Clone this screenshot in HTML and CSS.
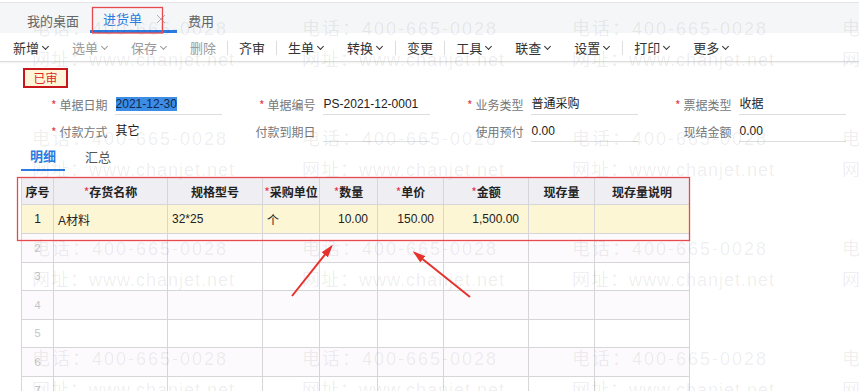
FILE: index.html
```html
<!DOCTYPE html>
<html>

<head>
    <meta charset="utf-8">
    <meta name="viewport" content="width=device-width, initial-scale=1.0" />
    <link rel="stylesheet" href="styles.css">
</head>

<body>
    <div class="page">
        <!-- Tabs -->
        <div class="tabbar">
            <div class="tab">我的桌面</div>
            <div class="tab active">进货单
                <svg class="close" width="10" height="10" viewBox="0 0 10 10">
                    <path d="M1 1L9 9M9 1L1 9" stroke="#b0b0b0" stroke-width="1" fill="none" />
                </svg>
            </div>
            <div class="tab">费用</div>
        </div>

        <!-- Toolbar -->
        <div class="toolbar">
            <span class="tool drop">新增</span>
            <span class="tool drop off">选单</span>
            <span class="tool drop off">保存</span>
            <span class="tool off">删除</span>
            <span class="sep"></span>
            <span class="tool">齐审</span>
            <span class="sep"></span>
            <span class="tool drop">生单</span>
            <span class="tool drop">转换</span>
            <span class="sep"></span>
            <span class="tool">变更</span>
            <span class="sep"></span>
            <span class="tool drop">工具</span>
            <span class="tool drop">联查</span>
            <span class="tool drop">设置</span>
            <span class="sep"></span>
            <span class="tool drop">打印</span>
            <span class="tool drop">更多</span>
        </div>

        <div class="content">
            <div class="stamp">已审</div>

            <!-- Header fields -->
            <div class="form">
                <div class="field"><label><i>*</i>单据日期</label><div class="val"><span class="sel">2021-12-30</span></div></div>
                <div class="field"><label><i>*</i>单据编号</label><div class="val">PS-2021-12-0001</div></div>
                <div class="field"><label><i>*</i>业务类型</label><div class="val">普通采购</div></div>
                <div class="field"><label><i>*</i>票据类型</label><div class="val">收据</div></div>
                <div class="field"><label><i>*</i>付款方式</label><div class="val bare">其它</div></div>
                <div class="field"><label>付款到期日</label><div class="val"></div></div>
                <div class="field"><label>使用预付</label><div class="val">0.00</div></div>
                <div class="field"><label>现结金额</label><div class="val">0.00</div></div>
            </div>

            <div class="subtabs">
                <div class="subtab active">明细</div>
                <div class="subtab">汇总</div>
            </div>

            <!-- Detail grid -->
            <table class="grid">
                <colgroup>
                    <col style="width:32px">
                    <col style="width:114px">
                    <col style="width:95px">
                    <col style="width:57px">
                    <col style="width:58px">
                    <col style="width:66px">
                    <col style="width:85px">
                    <col style="width:66px">
                    <col style="width:95px">
                </colgroup>
                <thead>
                    <tr>
                        <th>序号</th>
                        <th><i>*</i>存货名称</th>
                        <th>规格型号</th>
                        <th><i>*</i>采购单位</th>
                        <th><i>*</i>数量</th>
                        <th><i>*</i>单价</th>
                        <th><i>*</i>金额</th>
                        <th>现存量</th>
                        <th>现存量说明</th>
                    </tr>
                </thead>
                <tbody>
                    <tr class="filled">
                        <td class="no">1</td>
                        <td>A材料</td>
                        <td>32*25</td>
                        <td>个</td>
                        <td class="num">10.00</td>
                        <td class="num">150.00</td>
                        <td class="num">1,500.00</td>
                        <td></td>
                        <td></td>
                    </tr>
                    <tr><td class="idx">2</td><td></td><td></td><td></td><td></td><td></td><td></td><td></td><td></td></tr>
                    <tr><td class="idx">3</td><td></td><td></td><td></td><td></td><td></td><td></td><td></td><td></td></tr>
                    <tr><td class="idx">4</td><td></td><td></td><td></td><td></td><td></td><td></td><td></td><td></td></tr>
                    <tr><td class="idx">5</td><td></td><td></td><td></td><td></td><td></td><td></td><td></td><td></td></tr>
                    <tr><td class="idx">6</td><td></td><td></td><td></td><td></td><td></td><td></td><td></td><td></td></tr>
                    <tr><td class="idx">7</td><td></td><td></td><td></td><td></td><td></td><td></td><td></td><td></td></tr>
                </tbody>
            </table>
        </div>

        <!-- Watermark -->
        <div class="wm">
            <div><span class="tel">电话：400-665-0028</span><span class="web">网址：www.chanjet.net</span></div>
            <div><span class="tel">电话：400-665-0028</span><span class="web">网址：www.chanjet.net</span></div>
            <div><span class="tel">电话：400-665-0028</span><span class="web">网址：www.chanjet.net</span></div>
            <div><span class="tel">电话：400-665-0028</span><span class="web">网址：www.chanjet.net</span></div>
            <div><span class="tel">电话：400-665-0028</span><span class="web">网址：www.chanjet.net</span></div>
            <div><span class="tel">电话：400-665-0028</span><span class="web">网址：www.chanjet.net</span></div>
            <div><span class="tel">电话：400-665-0028</span><span class="web">网址：www.chanjet.net</span></div>
            <div><span class="tel">电话：400-665-0028</span><span class="web">网址：www.chanjet.net</span></div>
            <div><span class="tel">电话：400-665-0028</span><span class="web">网址：www.chanjet.net</span></div>
            <div><span class="tel">电话：400-665-0028</span><span class="web">网址：www.chanjet.net</span></div>
            <div><span class="tel">电话：400-665-0028</span><span class="web">网址：www.chanjet.net</span></div>
            <div><span class="tel">电话：400-665-0028</span><span class="web">网址：www.chanjet.net</span></div>
            <div><span class="tel">电话：400-665-0028</span><span class="web">网址：www.chanjet.net</span></div>
            <div><span class="tel">电话：400-665-0028</span><span class="web">网址：www.chanjet.net</span></div>
            <div><span class="tel">电话：400-665-0028</span><span class="web">网址：www.chanjet.net</span></div>
            <div><span class="tel">电话：400-665-0028</span><span class="web">网址：www.chanjet.net</span></div>
        </div>

        <!-- Red annotation marks -->
        <svg class="marks" width="859" height="391" viewBox="0 0 859 391">
            <defs>
                <marker id="head" markerWidth="13" markerHeight="8" refX="10" refY="4" orient="auto"
                    markerUnits="userSpaceOnUse">
                    <path d="M0 0L13 4L0 8z" fill="#e5322d" />
                </marker>
            </defs>
            <rect x="92.5" y="7.5" width="70" height="25.5" fill="none" stroke="#e64a4f" stroke-width="1.3" />
            <rect x="17.5" y="177.5" width="672" height="63" fill="none" stroke="#e64a4f" stroke-width="1.3" />
            <line x1="292" y1="296" x2="331" y2="247" stroke="#e5322d" stroke-width="2" marker-end="url(#head)" />
            <line x1="470" y1="297" x2="415" y2="253" stroke="#e5322d" stroke-width="2" marker-end="url(#head)" />
        </svg>
    </div>
</body>

</html>
```

FILE: styles.css
```css
body {
    margin: 0;
    background: #fff;
    font-family: "Liberation Sans", "Noto Sans CJK SC", sans-serif;
    color: #222;
}

.page {
    position: relative;
    width: 859px;
    height: 391px;
    overflow: hidden;
}

/* tabs */
.tabbar {
    display: flex;
    align-items: flex-end;
    height: 30px;
    margin-top: 2px;
    padding-left: 16px;
    border-top: 1px solid #e4e4e6;
    background: #f5f6f8;
    font-family: "Noto Sans CJK SC", sans-serif;
    font-size: 13px;
}

.tab {
    display: flex;
    align-items: center;
    height: 26px;
    padding: 0 11px;
    color: #666;
    box-sizing: border-box;
}

.tab.active {
    padding: 0 11px 0 13px;
    color: #2b7be0;
    border-bottom: 3px solid #2b7be0;
}

.close {
    margin-left: 14px;
}

/* toolbar */
.toolbar {
    display: flex;
    align-items: center;
    height: 29px;
    padding-left: 2px;
    padding-top: 1px;
    box-sizing: border-box;
    border-bottom: 1px solid #dcdcdc;
    box-shadow: 0 1px 2px rgba(0, 0, 0, 0.06);
    font-family: "Noto Sans CJK SC", sans-serif;
    font-size: 13px;
    color: #333;
}

.tool {
    display: flex;
    align-items: center;
    padding: 0 11px;
}

.tool.off {
    color: #9a9a9a;
}

.tool.drop::after {
    content: "";
    width: 4px;
    height: 4px;
    margin: -3px 2px 0 4px;
    border-right: 1.5px solid currentColor;
    border-bottom: 1.5px solid currentColor;
    transform: rotate(45deg);
}

.sep {
    width: 1px;
    height: 14px;
    background: #dedede;
}

/* content */
.content {
    padding-top: 6px;
}

.stamp {
    width: 45px;
    height: 20px;
    margin-left: 23px;
    box-sizing: border-box;
    border: 2px solid #c8161d;
    background: #fdf6d8;
    color: #e0261f;
    font-family: "Noto Sans CJK SC", sans-serif;
    font-size: 12px;
    line-height: 16px;
    text-align: center;
}

.form {
    display: grid;
    grid-template-columns: repeat(4, 204px);
    column-gap: 4px;
    row-gap: 6px;
    margin: 6px 0 0 18px;
    font-size: 12px;
}

.field {
    display: flex;
    align-items: flex-end;
}

.field label {
    width: 90px;
    margin-right: 7px;
    text-align: right;
    color: #777;
    font-family: "Noto Sans CJK SC", sans-serif;
    line-height: 21px;
    white-space: nowrap;
}

.field label i,
.grid th i {
    font-style: normal;
    color: #e8334d;
    margin-right: 3px;
}

.val {
    width: 107px;
    height: 20px;
    line-height: 20px;
    padding-left: 1px;
    border-bottom: 1px solid #dedede;
    color: #222;
    white-space: nowrap;
}

.val.bare {
    border-bottom-color: transparent;
}

.sel {
    display: inline-block;
    line-height: 14px;
    background: #3d8de6;
    color: #0f2a52;
}

.subtabs {
    display: flex;
    margin: 0 0 0 21px;
    font-family: "Noto Sans CJK SC", sans-serif;
    font-size: 13px;
}

.subtab {
    height: 29px;
    line-height: 29px;
    padding: 0 9px;
    box-sizing: border-box;
    color: #555;
}

.subtab.active {
    width: 44px;
    margin-right: 11px;
    color: #2b7be0;
    font-weight: bold;
    border-bottom: 2px solid #2b7be0;
    line-height: 28px;
}

/* grid */
.grid {
    margin: 6px 0 0 21px;
    border-collapse: collapse;
    table-layout: fixed;
    width: 668px;
    font-size: 12px;
}

.grid th,
.grid td {
    border: 1px solid #d6d6d8;
    padding: 0 4px;
    white-space: nowrap;
    overflow: hidden;
}

.grid th {
    height: 26px;
    padding: 0;
    background: #efeef2;
    font-family: "Noto Sans CJK SC", sans-serif;
    font-weight: bold;
    color: #222;
    text-align: center;
}

.grid th i {
    margin-right: 0;
    font-weight: normal;
}

.grid td {
    height: 27.5px;
}

.grid tbody tr:nth-child(even) td {
    background: #fdfafd;
}

.grid tr.filled td {
    height: 28px;
    background: #fdf6d5;
    color: #222;
}

.grid td.no {
    text-align: center;
}

.grid td.num {
    text-align: right;
    padding-right: 9px;
}

.grid td.idx {
    text-align: center;
    color: #c4c4c4;
    font-size: 11px;
}

/* watermark over everything */
.wm {
    position: absolute;
    left: 32px;
    top: 14px;
    display: grid;
    grid-template-columns: repeat(4, 270px);
    grid-auto-rows: 110px;
    pointer-events: none;
    font-family: "Liberation Sans", "Noto Sans CJK SC", sans-serif;
    font-size: 18px;
    line-height: 31px;
    white-space: nowrap;
    color: rgba(0, 0, 0, 0.075);
}

.wm span {
    display: block;
}

.wm .tel {
    letter-spacing: 2px;
}

.wm .web {
    letter-spacing: 1px;
}

.marks {
    position: absolute;
    left: 0;
    top: 0;
    pointer-events: none;
}
```
